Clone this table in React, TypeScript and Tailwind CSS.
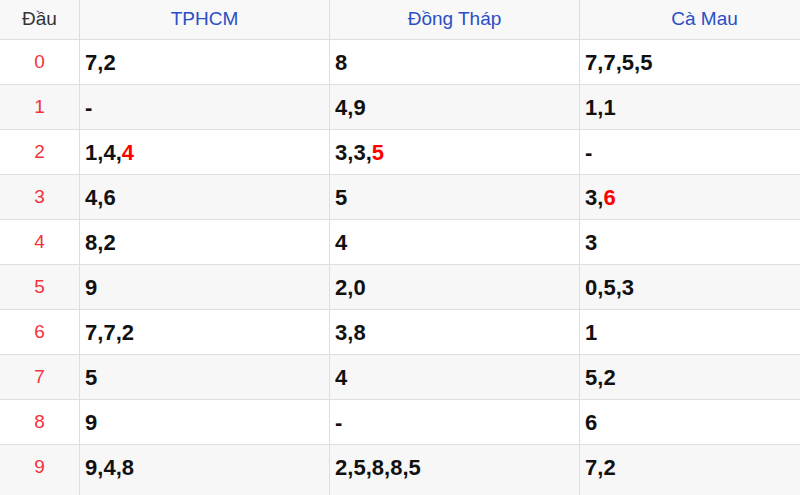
type Part = { v: string; hot?: boolean };

const provinces = ["TPHCM", "Đồng Tháp", "Cà Mau"];

// each cell: list of digits, "!" prefix marks the special (red) one
const rows: string[][] = [
  ["7,2", "8", "7,7,5,5"],
  ["-", "4,9", "1,1"],
  ["1,4,!4", "3,3,!5", "-"],
  ["4,6", "5", "3,!6"],
  ["8,2", "4", "3"],
  ["9", "2,0", "0,5,3"],
  ["7,7,2", "3,8", "1"],
  ["5", "4", "5,2"],
  ["9", "-", "6"],
  ["9,4,8", "2,5,8,8,5", "7,2"],
];

function parse(cell: string): Part[] {
  return cell.split(",").map((v) => (v.startsWith("!") ? { v: v.slice(1), hot: true } : { v }));
}

function Cell({ value }: { value: string }) {
  const parts = parse(value);
  return (
    <div className="w-[250px] shrink-0 h-full border-r border-[#dedede]">
      <div className="h-[44px] flex items-center pl-[5px] pt-px font-bold text-[22px] text-[#111]">
        {parts.map((p, i) => (
          <span key={i}>
            {i > 0 && ","}
            <span className={p.hot ? "text-[#ff0000]" : ""}>{p.v}</span>
          </span>
        ))}
      </div>
    </div>
  );
}

export default function App() {
  return (
    <div
      className="w-[800px] h-[495px] overflow-hidden bg-white"
      style={{ fontFamily: '"Liberation Sans", Arial, sans-serif' }}
    >
      <div className="w-[830px]">
        <div className="flex h-[40px] bg-[#f8f8f8] border-b border-[#dedede] text-[19px]">
          <div className="w-[80px] shrink-0 flex items-center justify-center border-r border-[#dedede] text-[#333]">
            Đầu
          </div>
          {provinces.map((p) => (
            <div
              key={p}
              className="w-[250px] shrink-0 flex items-center justify-center border-r border-[#dedede] text-[#2a4fc4]"
            >
              {p}
            </div>
          ))}
        </div>
        {rows.map((r, i) => (
          <div
            key={i}
            className={`flex ${i === rows.length - 1 ? "h-[60px]" : "h-[45px] border-b border-[#dedede]"} ${
              i % 2 === 1 ? "bg-[#f7f7f7]" : "bg-white"
            }`}
          >
            <div className="w-[80px] shrink-0 h-full border-r border-[#dedede] text-[19px] text-[#f2333a]">
              <div className="h-[44px] pt-px flex items-center justify-center">{i}</div>
            </div>
            {r.map((c, j) => (
              <Cell key={j} value={c} />
            ))}
          </div>
        ))}
      </div>
    </div>
  );
}
